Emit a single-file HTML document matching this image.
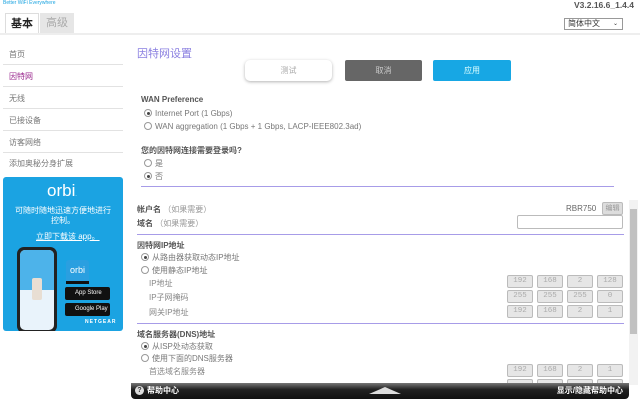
<!DOCTYPE html>
<html><head><meta charset="utf-8"><style>
*{margin:0;padding:0;box-sizing:border-box}
body{width:640px;height:401px;overflow:hidden;background:#fff;font-family:"Liberation Sans","Noto Sans CJK SC",sans-serif;font-size:8px;color:#555;position:relative}
.a{position:absolute;white-space:nowrap}
.nav{position:absolute;left:3px;width:120px;height:22px;border-bottom:1px solid #e2e2e2;padding:6px 0 0 6px;color:#777;font-size:8px}
.rad{display:inline-block;width:8px;height:8px;border:1px solid #999;border-radius:50%;vertical-align:-1px;margin-right:3px;background:#fff;position:relative}
.rad.on::after{content:"";position:absolute;left:1.5px;top:1.5px;width:3px;height:3px;border-radius:50%;background:#444}
.box{position:absolute;width:26px;height:13px;border:1px solid #bbb;background:#e6e6e6;border-radius:2px;color:#aaa;font-family:"Liberation Mono",monospace;font-size:7.5px;text-align:center;line-height:11px}
.hr{position:absolute;height:1px;background:#a79ce8}
</style></head><body>
<div class="a" style="left:3px;top:0;font-size:5px;color:#1aa3e0">Better WiFi Everywhere</div>
<div class="a" style="right:6px;top:0;font-size:8.5px;font-weight:bold;color:#555">V3.2.16.6_1.4.4</div>
<div class="a" style="left:5px;top:13px;width:34px;height:21px;border:1px solid #ddd;border-bottom:none;background:#fff;font-size:11px;font-weight:bold;color:#222;text-align:center;line-height:20px">基本</div>
<div class="a" style="left:40px;top:13px;width:34px;height:20px;background:#e6e6e6;font-size:11px;color:#aaa;text-align:center;line-height:20px">高级</div>
<div class="a" style="left:0;top:33px;width:640px;height:2px;background:#eee"></div>
<div class="a" style="left:564px;top:18px;width:59px;height:12px;border:1px solid #999;font-size:8px;color:#333;line-height:10px;padding-left:3px">简体中文<span style="position:absolute;right:4px;font-size:6px">⌄</span></div>

<div class="nav" style="top:43px">首页</div>
<div class="nav" style="top:65px;color:#9b2a8f">因特网</div>
<div class="nav" style="top:87px">无线</div>
<div class="nav" style="top:109px">已接设备</div>
<div class="nav" style="top:131px">访客网络</div>
<div class="nav" style="top:152px;border:none">添加奥秘分身扩展</div>

<div class="a" style="left:3px;top:177px;width:120px;height:154px;background:#1ba3e2;border-radius:3px;overflow:hidden;color:#fff">
<div class="a" style="left:44px;top:4px;font-size:17px;font-weight:300">orbi<span style="font-size:5px">.</span></div>
<div class="a" style="left:0;width:120px;top:29px;text-align:center;font-size:8px;white-space:normal;line-height:10px;padding:0 10px">可随时随地迅速方便地进行控制。</div>
<div class="a" style="left:33px;top:54px;font-size:8px;text-decoration:underline">立即下载该 app。</div>
<div class="a" style="left:14px;top:70px;width:40px;height:86px;background:#222;border-radius:7px"></div>
<div class="a" style="left:17px;top:73px;width:34px;height:80px;background:#e9f3fb;border-radius:5px"></div>
<div class="a" style="left:17px;top:73px;width:34px;height:40px;background:#4db3ea;border-radius:5px 5px 0 0"></div>
<div class="a" style="left:29px;top:101px;width:10px;height:22px;background:#e8ded3;border-radius:2px"></div>
<div class="a" style="left:63px;top:83px;width:23px;height:23px;background:#2a9fe0;border-radius:3px;font-size:9px;text-align:center;line-height:20px">orbi</div>
<div class="a" style="left:63px;top:104px;width:23px;height:3px;background:#111"></div>
<div class="a" style="left:62px;top:110px;width:45px;height:13px;background:#111;border-radius:2px;font-size:6px;line-height:13px;padding-left:10px"> App Store</div>
<div class="a" style="left:62px;top:126px;width:45px;height:13px;background:#111;border-radius:2px;font-size:6px;line-height:13px;padding-left:10px">Google Play</div>
<div class="a" style="left:82px;top:142px;font-size:5px;font-weight:bold;letter-spacing:1px">NETGEAR</div>
</div>

<div class="a" style="left:137px;top:45px;font-size:11px;color:#8a7fe0">因特网设置</div>
<div class="a" style="left:245px;top:60px;width:87px;height:21px;border-radius:5px;box-shadow:0 1px 3px rgba(0,0,0,.3);background:#fff;color:#aaa;text-align:center;line-height:21px">测试</div>
<div class="a" style="left:345px;top:60px;width:77px;height:21px;background:#666;border-radius:2px;color:#ccc;text-align:center;line-height:21px">取消</div>
<div class="a" style="left:433px;top:60px;width:78px;height:21px;background:#17a7e4;border-radius:2px;color:#dff;text-align:center;line-height:21px">应用</div>

<div class="a" style="left:141px;top:95px;font-weight:bold;color:#555">WAN Preference</div>
<div class="a" style="left:144px;top:109px;color:#777"><span class="rad on"></span>Internet Port (1 Gbps)</div>
<div class="a" style="left:144px;top:122px;color:#777"><span class="rad"></span>WAN aggregation (1 Gbps + 1 Gbps, LACP-IEEE802.3ad)</div>
<div class="a" style="left:141px;top:145px;font-weight:bold;color:#555">您的因特网连接需要登录吗?</div>
<div class="a" style="left:144px;top:158px;color:#777"><span class="rad"></span>是</div>
<div class="a" style="left:144px;top:171px;color:#777"><span class="rad on"></span>否</div>
<div class="hr" style="left:141px;top:186px;width:473px"></div>

<div class="a" style="left:137px;top:204px"><b style="color:#555">帐户名</b> <span style="color:#999">（如果需要）</span></div>
<div class="a" style="left:137px;top:218px"><b style="color:#555">域名</b> <span style="color:#999">（如果需要）</span></div>
<div class="a" style="left:566px;top:204px;color:#666">RBR750</div>
<div class="a" style="left:602px;top:202px;width:21px;height:13px;background:#ddd;border:1px solid #bbb;border-radius:2px;color:#999;font-size:7px;text-align:center;line-height:11px">编辑</div>
<div class="a" style="left:517px;top:215px;width:106px;height:14px;border:1px solid #bbb;border-radius:2px"></div>
<div class="hr" style="left:137px;top:234px;width:487px"></div>
<div class="a" style="left:137px;top:240px;font-weight:bold;color:#555">因特网IP地址</div>
<div class="a" style="left:141px;top:252px;color:#777"><span class="rad on"></span>从路由器获取动态IP地址</div>
<div class="a" style="left:141px;top:265px;color:#777"><span class="rad"></span>使用静态IP地址</div>
<div class="a" style="left:149px;top:278px;color:#888">IP地址</div>
<div class="a" style="left:149px;top:292px;color:#888">IP子网掩码</div>
<div class="a" style="left:149px;top:307px;color:#888">网关IP地址</div>
<div class="box" style="left:507px;top:275px">192</div><div class="box" style="left:537px;top:275px">168</div><div class="box" style="left:567px;top:275px">2</div><div class="box" style="left:597px;top:275px">128</div>
<div class="box" style="left:507px;top:290px">255</div><div class="box" style="left:537px;top:290px">255</div><div class="box" style="left:567px;top:290px">255</div><div class="box" style="left:597px;top:290px">0</div>
<div class="box" style="left:507px;top:305px">192</div><div class="box" style="left:537px;top:305px">168</div><div class="box" style="left:567px;top:305px">2</div><div class="box" style="left:597px;top:305px">1</div>
<div class="hr" style="left:137px;top:323px;width:487px"></div>
<div class="a" style="left:137px;top:329px;font-weight:bold;color:#555">域名服务器(DNS)地址</div>
<div class="a" style="left:141px;top:341px;color:#777"><span class="rad on"></span>从ISP处动态获取</div>
<div class="a" style="left:141px;top:353px;color:#777"><span class="rad"></span>使用下面的DNS服务器</div>
<div class="a" style="left:149px;top:366px;color:#888">首选域名服务器</div>
<div class="box" style="left:507px;top:364px">192</div><div class="box" style="left:537px;top:364px">168</div><div class="box" style="left:567px;top:364px">2</div><div class="box" style="left:597px;top:364px">1</div>
<div class="box" style="left:507px;top:379px"></div><div class="box" style="left:537px;top:379px"></div><div class="box" style="left:567px;top:379px"></div><div class="box" style="left:597px;top:379px"></div>

<div class="a" style="left:629px;top:200px;width:9px;height:185px;background:#f2f2f2"></div>
<div class="a" style="left:630px;top:209px;width:7px;height:125px;background:#c1c1c1"></div>

<div class="a" style="left:131px;top:383px;width:498px;height:16px;border-radius:0 0 4px 4px;background:linear-gradient(#777,#222 40%,#111);color:#fff;font-size:8px;font-weight:bold;line-height:16px">
<span style="position:absolute;left:4px;top:3px;width:9px;height:9px;border-radius:50%;background:#ddd;color:#333;font-size:7px;line-height:9px;text-align:center">?</span>
<span style="position:absolute;left:16px">帮助中心</span>
<span style="position:absolute;left:238px;top:4px;width:0;height:0;border-left:16px solid transparent;border-right:16px solid transparent;border-bottom:7px solid #ddd"></span>
<span style="position:absolute;right:6px">显示/隐藏帮助中心</span>
</div>
</body></html>
